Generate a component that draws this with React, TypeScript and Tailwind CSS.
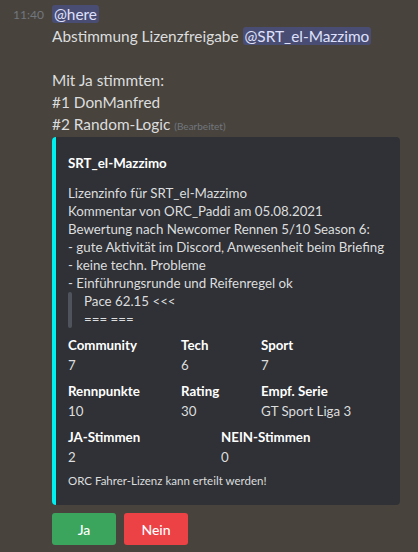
import React from "react";

type Field = { name: string; value: string };

const rowOne: Field[] = [
  { name: "Community", value: "7" },
  { name: "Tech", value: "6" },
  { name: "Sport", value: "7" },
];

const rowTwo: Field[] = [
  { name: "Rennpunkte", value: "10" },
  { name: "Rating", value: "30" },
  { name: "Empf. Serie", value: "GT Sport Liga 3" },
];

const rowThree: Field[] = [
  { name: "JA-Stimmen", value: "2" },
  { name: "NEIN-Stimmen", value: "0" },
];

const Mention = ({ children }: { children: React.ReactNode }) => (
  <span className="rounded-[3px] bg-[#4a4d73] px-[2px] text-[#dee0fc]">
    {children}
  </span>
);

const FieldCell = ({ field }: { field: Field }) => (
  <div className="flex flex-col">
    <div className="text-[13.3px] font-bold leading-[20px] text-white">{field.name}</div>
    <div className="text-[13.3px] leading-[20px] text-[#dcddde]">{field.value}</div>
  </div>
);

export default function App() {
  return (
    <div className="min-h-[552px] w-[418px] bg-[#48443d] font-[Lato,'Noto_Sans',sans-serif] text-[#dcddde]">
      <div className="flex pt-[3px] pr-[18px]">
        {/* Zeitstempel */}
        <div className="w-[52px] pl-[13px] pt-[2px] text-[12px] leading-[20px] text-[#72767d]">
          11:40
        </div>

        <div className="flex-1 min-w-0">
          {/* Nachrichtentext */}
          <div className="text-[15.4px] leading-[22px]">
            <div>
              <Mention>@here</Mention>
            </div>
            <div>
              Abstimmung Lizenzfreigabe <Mention>@SRT_el-Mazzimo</Mention>
            </div>
            <div className="h-[22px]" />
            <div>Mit Ja stimmten:</div>
            <div>#1 DonManfred</div>
            <div>
              #2 Random-Logic{" "}
              <span className="text-[10px] leading-[0] text-[#72767d]">(Bearbeitet)</span>
            </div>
          </div>

          {/* Embed */}
          <div className="mt-[2px] flex overflow-hidden rounded-[4px] bg-[#2f3136]">
            <div className="w-[4px] shrink-0 bg-[#00f0f0]" />
            <div className="flex-1 pl-[12px] pr-[12px] pt-[16px] pb-[16px]">
              <div className="text-[13.3px] font-bold leading-[20px] text-white">
                SRT_el-Mazzimo
              </div>

              <div className="mt-[11px] whitespace-nowrap text-[13.3px] leading-[18px]">
                <div>Lizenzinfo für SRT_el-Mazzimo</div>
                <div>Kommentar von ORC_Paddi am 05.08.2021</div>
                <div>Bewertung nach Newcomer Rennen 5/10 Season 6:</div>
                <div>- gute Aktivität im Discord, Anwesenheit beim Briefing</div>
                <div>- keine techn. Probleme</div>
                <div>- Einführungsrunde und Reifenregel ok</div>
                {/* Zitat */}
                <div className="flex">
                  <div className="w-[4px] shrink-0 rounded-[4px] bg-[#4f545c]" />
                  <div className="pl-[12px]">
                    <div>Pace 62.15 &lt;&lt;&lt;</div>
                    <div>=== ===</div>
                  </div>
                </div>
              </div>

              {/* Felder */}
              <div className="mt-[7px] grid grid-cols-[113px_80px_1fr] gap-y-[6px]">
                {rowOne.map((f) => (
                  <FieldCell key={f.name} field={f} />
                ))}
                {rowTwo.map((f) => (
                  <FieldCell key={f.name} field={f} />
                ))}
              </div>
              <div className="mt-[6px] grid grid-cols-[153px_1fr]">
                {rowThree.map((f) => (
                  <FieldCell key={f.name} field={f} />
                ))}
              </div>

              <div className="mt-[6px] text-[11.5px] leading-[16px] text-[#dcddde]">
                ORC Fahrer-Lizenz kann erteilt werden!
              </div>
            </div>
          </div>

          {/* Buttons */}
          <div className="mt-[8px] flex gap-[8px]">
            <button className="h-[32px] w-[64px] rounded-[3px] bg-[#3ba55d] text-[14px] font-medium text-white">
              Ja
            </button>
            <button className="h-[32px] w-[64px] rounded-[3px] bg-[#ed4245] text-[14px] font-medium text-white">
              Nein
            </button>
          </div>
        </div>
      </div>
    </div>
  );
}
